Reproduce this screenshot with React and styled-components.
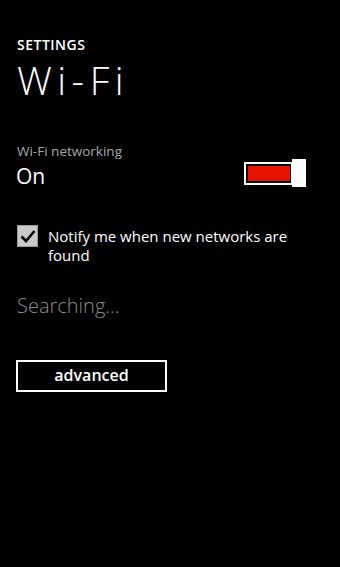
import React from 'react'
import styled, { createGlobalStyle } from 'styled-components'

const GlobalStyle = createGlobalStyle`
  html, body {
    margin: 0;
    padding: 0;
    background: #000;
  }
  body {
    font-family: "Open Sans", "Noto Sans", sans-serif;
    color: #fff;
  }
`

const Page = styled.div`
  width: 340px;
  height: 567px;
  background: #000;
  padding: 35px 0 0 17px;
  box-sizing: border-box;
  display: flex;
  flex-direction: column;
`

const AppTitle = styled.div`
  font-size: 14px;
  font-weight: 600;
  letter-spacing: 0.5px;
  line-height: 20px;
`

const PageTitle = styled.div`
  margin-top: 3px;
  font-size: 39px;
  font-weight: 300;
  line-height: 44px;
  letter-spacing: 5.5px;
`

const Setting = styled.div`
  display: flex;
  align-items: flex-start;
  justify-content: space-between;
  margin-top: 40px;
  padding-right: 34px;
`

const SettingText = styled.div`
  display: flex;
  flex-direction: column;
`

const Label = styled.div`
  font-size: 13.5px;
  color: #a8a8a8;
  line-height: 18px;
`

const Value = styled.div`
  margin-top: 2px;
  font-size: 21px;
  line-height: 28px;
  margin-left: -1px;
`

const Toggle = styled.div`
  display: flex;
  align-items: center;
  margin-top: 17px;
`

const Track = styled.div`
  width: 49px;
  height: 23px;
  border: 2px solid #fff;
  box-sizing: border-box;
  padding: 2px;
  margin-right: -1px;
`

const Fill = styled.div`
  height: 100%;
  width: 42px;
  background: #e51400;
`

const Thumb = styled.div`
  width: 14px;
  height: 28px;
  background: #fff;
`

const CheckRow = styled.label`
  display: flex;
  align-items: flex-start;
  margin-top: 35px;
  gap: 10px;
`

const Box = styled.span`
  flex: none;
  width: 21px;
  height: 22px;
  background: #c9c9c9;
  border: 1px solid #9a9a9a;
  box-sizing: border-box;
  display: flex;
  align-items: center;
  justify-content: center;
`

const CheckText = styled.span`
  font-size: 15px;
  line-height: 19px;
  margin-top: 2px;
  width: 270px;
`

const Status = styled.div`
  margin-top: 27px;
  font-size: 20px;
  font-weight: 300;
  color: #8c8c8c;
  line-height: 28px;
`

const Button = styled.button`
  margin-top: 40px;
  margin-left: -1px;
  width: 151px;
  height: 32px;
  background: transparent;
  border: 2px solid #fff;
  color: #fff;
  font-family: "Open Sans", "Noto Sans", sans-serif;
  font-size: 16px;
  font-weight: 600;
  padding: 0 0 2px;
`

const App = () => (
  <>
    <GlobalStyle />
    <Page>
      <AppTitle>SETTINGS</AppTitle>
      <PageTitle>Wi-Fi</PageTitle>
      <Setting>
        <SettingText>
          <Label>Wi-Fi networking</Label>
          <Value>On</Value>
        </SettingText>
        <Toggle>
          <Track><Fill /></Track>
          <Thumb />
        </Toggle>
      </Setting>
      <CheckRow>
        <Box>
          <svg width="16" height="14" viewBox="0 0 16 14">
            <path d="M1.5 7.5 L6 12 L14.5 2" fill="none" stroke="#000" strokeWidth="2.6" />
          </svg>
        </Box>
        <CheckText>Notify me when new networks are found</CheckText>
      </CheckRow>
      <Status>Searching...</Status>
      <div>
        <Button>advanced</Button>
      </div>
    </Page>
  </>
)

export default App
